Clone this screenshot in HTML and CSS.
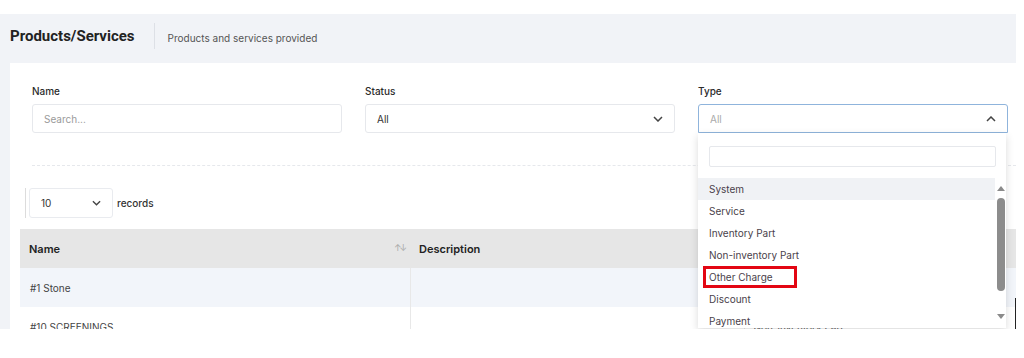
FILE: index.html
```html
<!DOCTYPE html>
<html lang="en">
<head>
    <meta charset="UTF-8">
    <title>Products/Services</title>
    <link rel="stylesheet" href="styles.css">
</head>
<body>
    <div class="frame">
        <div class="page-head">
            <h1>Products/Services</h1>
            <span class="head-divider"></span>
            <span class="subtitle">Products and services provided</span>
        </div>
        <section class="card">
            <div class="filters">
                <div class="field">
                    <label>Name</label>
                    <div class="control placeholder">Search...</div>
                </div>
                <div class="field">
                    <label>Status</label>
                    <div class="control">
                        <span>All</span>
                        <svg class="chev" width="10" height="6" viewBox="0 0 10 6"><path d="M1 1l4 4 4-4" fill="none" stroke="#444" stroke-width="1.5"/></svg>
                    </div>
                </div>
                <div class="field type-field">
                    <label>Type</label>
                    <div class="control open">
                        <span class="muted">All</span>
                        <svg class="chev" width="10" height="6" viewBox="0 0 10 6"><path d="M1 5l4-4 4 4" fill="none" stroke="#444" stroke-width="1.5"/></svg>
                    </div>
                    <div class="dropdown">
                        <div class="dd-search"></div>
                        <div class="dd-body">
                            <ul class="dd-list">
                                <li class="active">System</li>
                                <li>Service</li>
                                <li>Inventory Part</li>
                                <li>Non-inventory Part</li>
                                <li><span class="marked">Other Charge</span></li>
                                <li>Discount</li>
                                <li>Payment</li>
                            </ul>
                            <div class="scrollbar">
                                <span class="arrow up"></span>
                                <span class="thumb"></span>
                                <span class="arrow down"></span>
                            </div>
                        </div>
                    </div>
                </div>
            </div>
            <div class="sep"></div>
            <div class="records">
                <div class="records-select">
                    <span>10</span>
                    <svg width="9" height="6" viewBox="0 0 10 6"><path d="M1 1l4 4 4-4" fill="none" stroke="#444" stroke-width="1.5"/></svg>
                </div>
                <span class="records-label">records</span>
            </div>
            <table class="grid">
                <thead>
                    <tr>
                        <th class="col-name">Name <span class="sort">↑↓</span></th>
                        <th class="col-desc">Description</th>
                        <th class="col-type"></th>
                    </tr>
                </thead>
                <tbody>
                    <tr class="alt">
                        <td>#1 Stone</td>
                        <td></td>
                        <td></td>
                    </tr>
                    <tr>
                        <td>#10 SCREENINGS</td>
                        <td></td>
                        <td class="type-cell">Non-inventory Part</td>
                    </tr>
                </tbody>
            </table>
        </section>
        <span class="edge-mark"></span>
    </div>
</body>
</html>
```

FILE: styles.css
```css
body {
    margin: 0;
    background: #ffffff;
    font-family: 'Inter', 'Open Sans', sans-serif;
    color: #333;
}
.frame {
    position: relative;
    margin-top: 14px;
    width: 1016px;
    height: 315px;
    background: #f1f3f7;
    overflow: hidden;
}
.page-head {
    display: flex;
    align-items: center;
    height: 44px;
    padding: 0 0 5px 10px;
}
.page-head h1 {
    margin: 0;
    font-family: 'Roboto', sans-serif;
    font-size: 15px;
    font-weight: 700;
    color: #222;
}
.head-divider {
    width: 1px;
    height: 26px;
    background: #dde0e6;
    margin: 0 13px 0 19px;
}
.subtitle {
    font-size: 10px;
    color: #555;
    padding-top: 3px;
}
.card {
    background: #fff;
    margin-left: 10px;
    height: 266px;
    padding-top: 22px;
    box-sizing: border-box;
}
.filters {
    display: grid;
    grid-template-columns: 310px 310px 310px;
    column-gap: 23px;
    padding-left: 22px;
}
.field {
    position: relative;
}
.field label {
    display: block;
    font-size: 10px;
    font-weight: 500;
    color: #2b2b2b;
    line-height: 12px;
    margin-bottom: 7px;
}
.control {
    display: flex;
    align-items: center;
    justify-content: space-between;
    height: 29px;
    box-sizing: border-box;
    border: 1px solid #e6e8ec;
    border-radius: 3px;
    padding: 0 11px 0 11px;
    font-size: 10px;
    color: #333;
}
.control.placeholder {
    color: #9a9a9a;
}
.control.open {
    border-color: #8fb4dc;
    border-radius: 3px 3px 0 0;
}
.muted {
    color: #aaa;
}
.dropdown {
    position: absolute;
    top: 48px;
    left: 0;
    width: 308px;
    height: 195px;
    background: #fff;
    box-shadow: 0 3px 8px rgba(0, 0, 0, 0.15);
    box-sizing: border-box;
    padding-top: 13px;
}
.dd-search {
    margin: 0 10px 0 11px;
    height: 21px;
    border: 1px solid #e6e8ec;
    border-radius: 2px;
    box-sizing: border-box;
}
.dd-body {
    display: flex;
    margin-top: 11px;
}
.dd-list {
    list-style: none;
    margin: 0;
    padding: 0;
    flex: 1;
}
.dd-list li {
    height: 22px;
    line-height: 22px;
    padding-left: 11px;
    font-size: 10px;
    color: #4a3f4b;
}
.dd-list li.active {
    background: #f0f2f5;
}
.marked {
    display: inline-block;
    width: 94px;
    height: 22px;
    line-height: 16px;
    box-sizing: border-box;
    border: 3px solid #e30613;
    margin-left: -6px;
    padding-left: 3px;
    vertical-align: top;
}
.scrollbar {
    width: 11px;
    display: flex;
    flex-direction: column;
    align-items: center;
    padding-top: 8px;
}
.arrow {
    width: 0;
    height: 0;
    border-left: 4px solid transparent;
    border-right: 4px solid transparent;
}
.arrow.up {
    border-bottom: 5px solid #8a8a8a;
}
.arrow.down {
    border-top: 5px solid #8a8a8a;
    margin-top: 23px;
}
.thumb {
    width: 8px;
    height: 93px;
    margin-top: 7px;
    border-radius: 4px;
    background: #8c8c8c;
}
.sep {
    margin: 32px 0 0 22px;
    border-top: 1px dashed #e6e8ec;
}
.records {
    display: flex;
    align-items: center;
    margin: 22px 0 0 15px;
    border-left: 1px solid #dcdcdc;
    padding-left: 3px;
    height: 30px;
}
.records-select {
    display: flex;
    align-items: center;
    justify-content: space-between;
    width: 84px;
    height: 30px;
    box-sizing: border-box;
    border: 1px solid #e9ebef;
    border-radius: 3px;
    padding: 0 11px 0 11px;
    font-size: 10px;
}
.records-label {
    margin-left: 4px;
    font-size: 10px;
    font-weight: 500;
}
.grid {
    margin: 11px 0 0 10px;
    width: 996px;
    border-collapse: collapse;
    font-size: 10px;
}
.grid th {
    background: #e6e6e6;
    height: 39px;
    text-align: left;
    font-weight: 600;
    font-size: 11px;
    color: #222;
    padding: 0 9px;
}
.grid td {
    height: 39px;
    padding: 0 10px;
    color: #444;
    border-left: 1px solid #e8e8e8;
}
.grid td:first-child {
    border-left: none;
}
.col-name {
    width: 372px;
}
.col-desc {
    width: 316px;
}
.sort {
    float: right;
    font-size: 9px;
    font-weight: 400;
    color: #aaa;
    letter-spacing: -2px;
    margin-right: -4px;
}
.grid tr.alt td {
    background: #f2f5fa;
}
.grid td.type-cell {
    padding-left: 9px;
    color: #555;
}
.edge-mark {
    position: absolute;
    right: 0;
    bottom: 0;
    width: 1px;
    height: 31px;
    background: #222;
}
```
